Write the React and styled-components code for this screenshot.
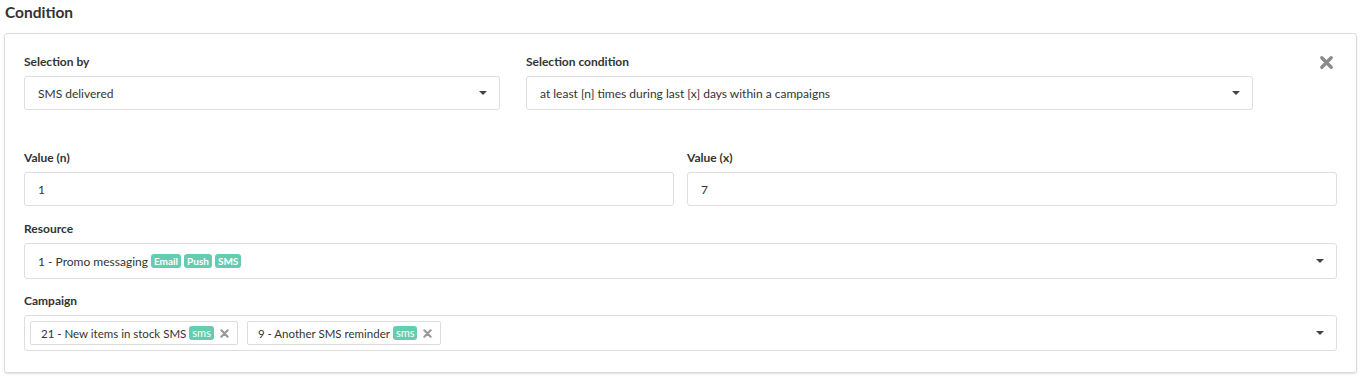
import React from 'react';
import styled, { createGlobalStyle } from 'styled-components';

const GlobalStyle = createGlobalStyle`
  body {
    margin: 0;
    background: #fff;
    font-family: Lato, "Open Sans", sans-serif;
    color: #333;
  }
`;

const Page = styled.div`
  padding: 2px 8px 5px 4px;
`;

const Heading = styled.h3`
  margin: 0 0 11px 1px;
  font-size: 15.5px;
  line-height: 20px;
  font-weight: 700;
  color: #333;
`;

const Card = styled.div`
  border: 1px solid #dcdcdc;
  border-radius: 3px;
  box-shadow: 0 1px 2px rgba(0, 0, 0, 0.12);
  padding: 19px 19px 21px 19px;
  display: flex;
  flex-direction: column;
`;

const TopRow = styled.div`
  display: grid;
  grid-template-columns: minmax(0, 476fr) minmax(0, 727fr) 58px;
  column-gap: 26px;
  margin-bottom: 39px;
`;

const Row = styled.div`
  display: grid;
  grid-template-columns: ${p => p.$cols || '1fr'};
  column-gap: 13px;
  margin-bottom: ${p => p.$gap || 0}px;
`;

const Field = styled.div`
  display: flex;
  flex-direction: column;
  min-width: 0;
`;

const Label = styled.label`
  font-size: 12px;
  line-height: 17px;
  font-weight: 700;
  color: #333;
  margin-bottom: 6px;
`;

const Box = styled.div`
  display: flex;
  align-items: center;
  box-sizing: border-box;
  height: ${p => p.$h || 34}px;
  border: 1px solid #dedede;
  border-radius: 3px;
  background: #fff;
  padding: 0 12px 0 ${p => p.$pl || 13}px;
  font-size: 12px;
  color: #333;
  white-space: nowrap;
`;

const Value = styled.span`
  flex: 1;
  display: flex;
  align-items: center;
  gap: 4px;
  min-width: 0;
`;

const Caret = styled.span`
  width: 0;
  height: 0;
  border-left: 4px solid transparent;
  border-right: 4px solid transparent;
  border-top: 4px solid #444;
  margin-left: 8px;
`;

const Tags = styled.span`
  display: inline-flex;
  gap: 3px;
  margin-left: -1px;
`;

const Tag = styled.span`
  display: inline-block;
  background: #66ccaf;
  color: #fff;
  font-size: ${p => (p.$light ? 11 : 10)}px;
  font-weight: ${p => (p.$light ? 400 : 700)};
  line-height: 14px;
  padding: 0 3px;
  border-radius: 3px;
`;

const Chip = styled.span`
  display: inline-flex;
  align-items: center;
  gap: 3px;
  height: 24px;
  box-sizing: border-box;
  border: 1px solid #dcdcdc;
  border-radius: 2px;
  padding: 0 8px 0 10px;
  font-size: 11.5px;
  margin-right: 5px;
`;

const ChipRemove = styled.span`
  display: inline-flex;
  margin-left: 3px;
`;

const CloseCell = styled.div`
  display: flex;
  justify-content: flex-end;
  padding: 2px 3px 0 0;
`;

const CloseIcon = () => (
  <svg width="15" height="15" viewBox="0 0 16 16">
    <path d="M3 3 L13 13 M13 3 L3 13" stroke="#8a8a8a" strokeWidth="3.6" strokeLinecap="round" />
  </svg>
);

const ChipX = () => (
  <svg width="9" height="9" viewBox="0 0 10 10">
    <path d="M1.5 1.5 L8.5 8.5 M8.5 1.5 L1.5 8.5" stroke="#999" strokeWidth="2.4" strokeLinecap="round" />
  </svg>
);

const Select = ({ children, h, pl }) => (
  <Box $h={h} $pl={pl}>
    <Value>{children}</Value>
    <Caret />
  </Box>
);

export default function App() {
  return (
    <>
      <GlobalStyle />
      <Page>
        <Heading>Condition</Heading>
        <Card>
          <TopRow>
            <Field>
              <Label>Selection by</Label>
              <Select>SMS delivered</Select>
            </Field>
            <Field>
              <Label>Selection condition</Label>
              <Select>at least [n] times during last [x] days within a campaigns</Select>
            </Field>
            <CloseCell>
              <CloseIcon />
            </CloseCell>
          </TopRow>

          <Row $cols="1fr 1fr" $gap={14}>
            <Field>
              <Label>Value (n)</Label>
              <Box>1</Box>
            </Field>
            <Field>
              <Label>Value (x)</Label>
              <Box>7</Box>
            </Field>
          </Row>

          <Row $gap={13}>
            <Field>
              <Label>Resource</Label>
              <Select h={36}>
                1 - Promo messaging
                <Tags>
                  <Tag>Email</Tag>
                  <Tag>Push</Tag>
                  <Tag>SMS</Tag>
                </Tags>
              </Select>
            </Field>
          </Row>

          <Row>
            <Field>
              <Label>Campaign</Label>
              <Select h={36} pl={5}>
                <Chip>
                  21 - New items in stock SMS <Tag $light>sms</Tag>
                  <ChipRemove><ChipX /></ChipRemove>
                </Chip>
                <Chip>
                  9 - Another SMS reminder <Tag $light>sms</Tag>
                  <ChipRemove><ChipX /></ChipRemove>
                </Chip>
              </Select>
            </Field>
          </Row>
        </Card>
      </Page>
    </>
  );
}
